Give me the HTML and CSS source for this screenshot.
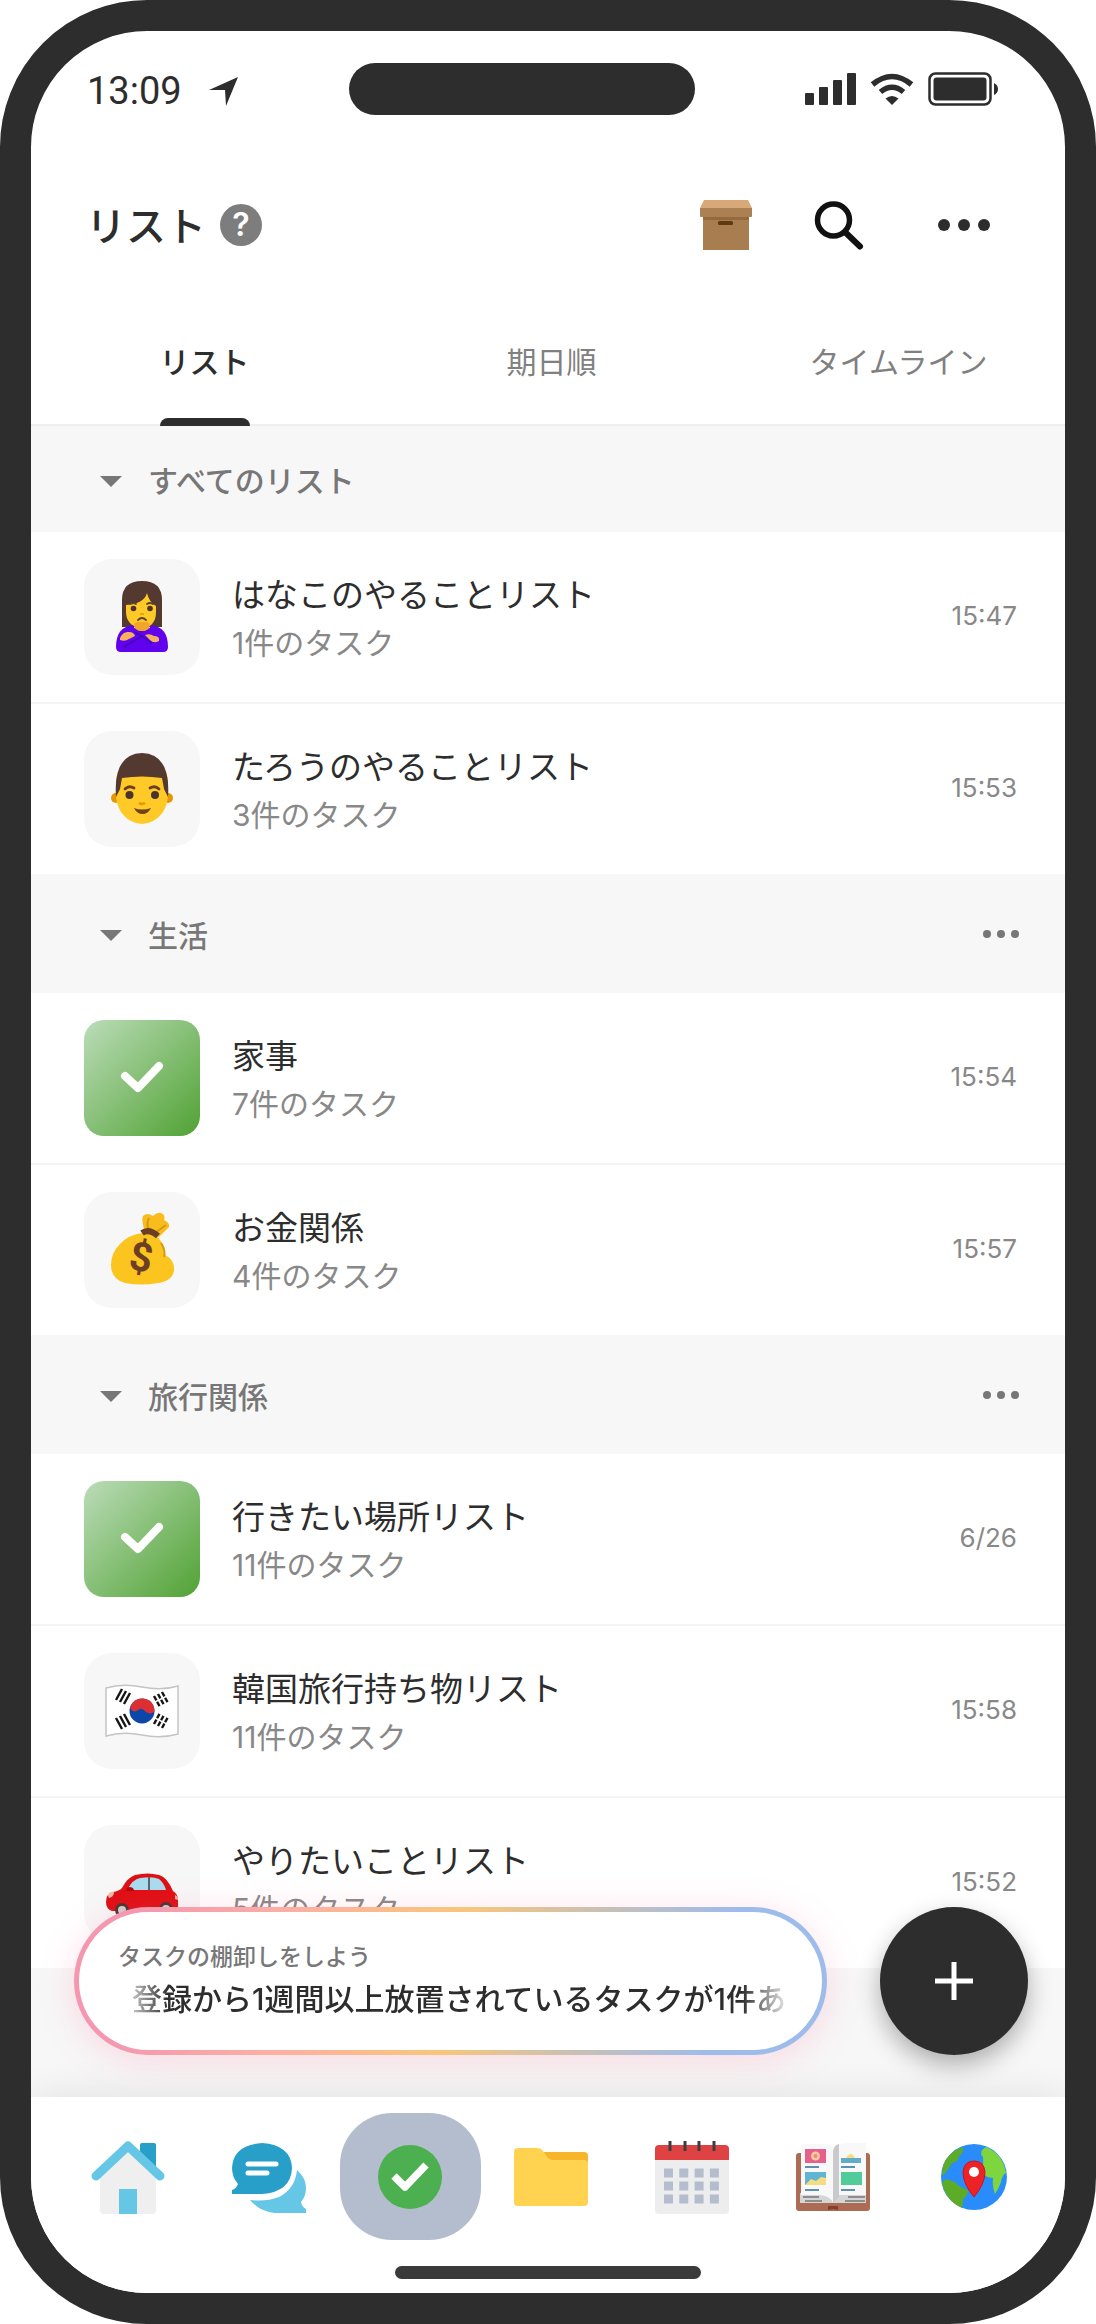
FILE: index.html
```html
<!DOCTYPE html>
<html lang="ja">
<head>
    <meta charset="UTF-8">
    <meta name="viewport" content="width=device-width, initial-scale=1.0">
    <title>リスト</title>
    <link rel="stylesheet" href="styles.css">
</head>
<body>
    <div class="phone">
        <div class="status">
            <div class="status-left">
                <span class="clock">13:09</span>
                <svg width="30" height="31" viewBox="0 0 30 31"><path d="M0 14 29 1 17 30 16 14z" fill="#2d2d2d"/></svg>
            </div>
            <div class="notch"></div>
            <div class="status-right">
                <svg width="51" height="33" viewBox="0 0 51 33" fill="#2d2d2d">
                    <rect x="0" y="20" width="9" height="12" rx="1"/>
                    <rect x="14" y="14" width="9" height="18" rx="1"/>
                    <rect x="28" y="7" width="9" height="25" rx="1"/>
                    <rect x="42" y="0" width="9" height="32" rx="1"/>
                </svg>
                <svg width="44" height="33" viewBox="0 0 44 33">
                    <path d="M2.500 11.500Q22-4.500 41.500 11.500M10.500 19Q22 9.500 33.500 19" fill="none" stroke="#2d2d2d" stroke-width="5.500"/>
                    <path d="M15.500 25.500Q22 20.500 28.500 25.500L22 32z" fill="#2d2d2d"/>
                </svg>
                <svg width="70" height="34" viewBox="0 0 70 34">
                    <rect x="1.500" y="1.500" width="61" height="31" rx="6" fill="none" stroke="#2d2d2d" stroke-width="2.500"/>
                    <rect x="5.500" y="5.500" width="53" height="23" rx="3" fill="#2d2d2d"/>
                    <path d="M66 11q4 2 4 6t-4 6z" fill="#2d2d2d"/>
                </svg>
            </div>
        </div>

        <header class="header">
            <h1>リスト</h1>
            <button class="help" type="button" aria-label="ヘルプ">?</button>
            <div class="header-actions">
                <button type="button" aria-label="アーカイブ">
                    <svg width="52" height="50" viewBox="0 0 52 50">
                        <path d="M3 17h46v33H3z" fill="#a87e50"/>
                        <path d="M3 17h46v3H3z" fill="#94693c"/>
                        <path d="M0 8h52v8q0 1-1 1H1q-1 0-1-1z" fill="#ab8153"/>
                        <path d="M4 0h44l4 8H0z" fill="#d8a878"/>
                        <rect x="18" y="21" width="15" height="4" rx="1.500" fill="#5e3a12"/>
                    </svg>
                </button>
                <button type="button" aria-label="検索">
                    <svg width="50" height="50" viewBox="0 0 50 50" fill="none" stroke="#111" stroke-linecap="round">
                        <circle cx="19.500" cy="20" r="16" stroke-width="5.500"/>
                        <path d="M31 32 46 46.500" stroke-width="6"/>
                    </svg>
                </button>
                <button type="button" aria-label="メニュー">
                    <svg width="52" height="12" viewBox="0 0 52 12" fill="#2d2d2d"><circle cx="6" cy="6" r="6"/><circle cx="26" cy="6" r="6"/><circle cx="46" cy="6" r="6"/></svg>
                </button>
            </div>
        </header>

        <div class="tabs" role="tablist">
            <button class="tab active" type="button" role="tab" aria-selected="true">リスト</button>
            <button class="tab" type="button" role="tab" aria-selected="false">期日順</button>
            <button class="tab" type="button" role="tab" aria-selected="false">タイムライン</button>
        </div>

        <main class="lists">
            <section>
                <div class="section-head first">
                    <button class="toggle" type="button"><span class="caret"></span>すべてのリスト</button>
                </div>
                <a class="row" href="#">
                    <span class="thumb">
                        <svg viewBox="0 0 116 116">
                            <path d="M38 68V41q0-19 20-19t20 19v27z" fill="#543930"/>
                            <path d="M51 60h14v12H51z" fill="#e59600"/>
                            <path d="M42 46Q60 45 63 34q2 9 9 13v6q0 15-15 17-15-4-15-17z" fill="#ffca28"/>
                            <path d="M32 88q0-20 17-22 2 6 9 6t9-6q17 2 17 22 0 5-5 5H37q-5 0-5-5z" fill="#6002ee"/>
                            <path d="M50 65q1 7 8 7t8-7l-3-2H53z" fill="#f2a52b"/>
                            <path d="M36 79q3-7 9-6 5 0 6 4l-6 3q-4 3-9 1zM61 76q5-2 9 1 6 0 5 5-5 3-9-1z" fill="#f7b05b"/>
                            <path d="m40 88 18-11 10 8M58 77l-8-4" fill="none" stroke="#3f0bb5" stroke-width="1.500"/>
                            <g fill="#4b322a"><circle cx="49.500" cy="49.500" r="2.800"/><circle cx="66" cy="49.500" r="2.800"/></g>
                            <path d="M46 45q3-2 6 0M63 45q3-2 6 0M54 61q4-4 8 0" fill="none" stroke="#5d4037" stroke-width="1.800" stroke-linecap="round"/>
                            <path d="M56 55h4" stroke="#e59600" stroke-width="1.500"/>
                        </svg>
                    </span>
                    <span class="info"><span class="name">はなこのやることリスト</span><span class="count">1件のタスク</span></span>
                    <time>15:47</time>
                </a>
                <a class="row" href="#">
                    <span class="thumb">
                        <svg viewBox="0 0 116 116">
                            <circle cx="32" cy="67" r="5" fill="#e59600"/>
                            <circle cx="84" cy="67" r="5" fill="#e59600"/>
                            <path d="M32 50q0-18 26-18t26 18v16q-2 17-15 24-11 6-22 0-13-7-15-24z" fill="#ffca28"/>
                            <path d="M32 66q-3-43 26-44 29 1 26 44l-4-8-2-11q-20-3-40 0l-2 11z" fill="#543930"/>
                            <g fill="#4b322a"><circle cx="45.500" cy="64" r="4"/><circle cx="71" cy="64" r="4"/></g>
                            <path d="M41 58q4-4 9-1M66 57q5-3 9 1" fill="none" stroke="#6d3f22" stroke-width="2.800" stroke-linecap="round"/>
                            <path d="M55 72q3 2 6 0" fill="none" stroke="#e59600" stroke-width="2.500"/>
                            <path d="M50 77q8 3 17 0-3 6-8.500 6T50 77z" fill="#704214"/>
                        </svg>
                    </span>
                    <span class="info"><span class="name">たろうのやることリスト</span><span class="count">3件のタスク</span></span>
                    <time>15:53</time>
                </a>
            </section>

            <section>
                <div class="section-head">
                    <button class="toggle" type="button"><span class="caret"></span>生活</button>
                    <button class="more" type="button" aria-label="メニュー">
                        <svg width="36" height="8" viewBox="0 0 36 8" fill="#777"><circle cx="4" cy="4" r="4"/><circle cx="18" cy="4" r="4"/><circle cx="32" cy="4" r="4"/></svg>
                    </button>
                </div>
                <a class="row" href="#">
                    <span class="thumb done">
                        <svg viewBox="0 0 116 116"><path d="M41 56 54 68 75 46" fill="none" stroke="#fff" stroke-width="8" stroke-linecap="round" stroke-linejoin="round"/></svg>
                    </span>
                    <span class="info"><span class="name">家事</span><span class="count">7件のタスク</span></span>
                    <time>15:54</time>
                </a>
                <a class="row" href="#">
                    <span class="thumb">
                        <svg viewBox="0 0 116 116">
                            <path d="M61 40q-4-12-2-16 4-4 10 0 6-6 11-1 1 3 0 5 6 3 5 7-5 5-10 10z" fill="#f9bc1d"/>
                            <path d="M65 39q-3-8 0-13M71 41l11-8" fill="none" stroke="#d69a12" stroke-width="2"/>
                            <path d="M58 41q14-1 18 7 5 6 5 15 10 5 9 16-2 10-16 12-17 3-33 0-14-4-14-18 0-12 9-21 8-9 22-11z" fill="#fcc41f"/>
                            <path d="M77 51q5 8 3 14" fill="none" stroke="#d69a12" stroke-width="2"/>
                            <path d="M58 41q7-5 16 3" fill="none" stroke="#6d3f22" stroke-width="6"/>
                            <text x="57" y="79" class="dollar" transform="rotate(10 57 66)">$</text>
                        </svg>
                    </span>
                    <span class="info"><span class="name">お金関係</span><span class="count">4件のタスク</span></span>
                    <time>15:57</time>
                </a>
            </section>

            <section>
                <div class="section-head">
                    <button class="toggle" type="button"><span class="caret"></span>旅行関係</button>
                    <button class="more" type="button" aria-label="メニュー">
                        <svg width="36" height="8" viewBox="0 0 36 8" fill="#777"><circle cx="4" cy="4" r="4"/><circle cx="18" cy="4" r="4"/><circle cx="32" cy="4" r="4"/></svg>
                    </button>
                </div>
                <a class="row" href="#">
                    <span class="thumb done">
                        <svg viewBox="0 0 116 116"><path d="M41 56 54 68 75 46" fill="none" stroke="#fff" stroke-width="8" stroke-linecap="round" stroke-linejoin="round"/></svg>
                    </span>
                    <span class="info"><span class="name">行きたい場所リスト</span><span class="count">11件のタスク</span></span>
                    <time>6/26</time>
                </a>
                <a class="row" href="#">
                    <span class="thumb">
                        <svg viewBox="0 0 116 116">
                            <path d="M22 35q17-5 36-1 20 4 36-1v48q-17 5-36 1-19-4-36 1z" fill="#fff" stroke="#c4c4c4" stroke-width="1.500"/>
                            <circle cx="58" cy="58" r="12.500" fill="#0a47a9"/>
                            <path d="M46 54q4-9 13-8.500 11 1 11.500 13-5 4-9 0-4-5-8-1-5 3-7.500-3.500z" fill="#dc2f34"/>
                            <g fill="none" stroke="#151515" stroke-width="2.400">
                                <path d="m32 47 6-11M36 49l6-11M40 51l6-11"/>
                                <path d="m70 71 6-11M74 73l6-11M78 75l6-11" stroke-dasharray="5 1.500"/>
                                <path d="m32 65 6 11M36 63l6 11M40 61l6 11"/>
                                <path d="m70 43 6 11M74 41l6 11M78 39l6 11" stroke-dasharray="5 1.500"/>
                            </g>
                        </svg>
                    </span>
                    <span class="info"><span class="name">韓国旅行持ち物リスト</span><span class="count">11件のタスク</span></span>
                    <time>15:58</time>
                </a>
                <a class="row" href="#">
                    <span class="thumb">
                        <svg viewBox="0 0 116 116">
                            <path d="M22 77q0-8 7-10 6-1 9-4 5-10 13-13 13-3 24 0 8 2 14 16 5 3 5 9v8q0 3-4 3H28q-6-2-6-9z" fill="#df0f14"/>
                            <path d="M43 65q6-11 13-12 13-2 19 1 5 4 7 11z" fill="#a9dcee"/>
                            <path d="M65 52v13" stroke="#5c6468" stroke-width="2"/>
                            <path d="M43 66q-2-3 2-4 5 0 5 4z" fill="#b5060b"/>
                            <path d="M24 71q1-5 6-4 0 5-5 6zM91 70q3 1 3 5l-3-1z" fill="#f6b9a7"/>
                            <circle cx="38" cy="85" r="7" fill="#4b3530"/><circle cx="38" cy="85" r="4" fill="#cfcfcf"/>
                            <circle cx="82" cy="84" r="7" fill="#4b3530"/><circle cx="82" cy="84" r="4" fill="#cfcfcf"/>
                        </svg>
                    </span>
                    <span class="info"><span class="name">やりたいことリスト</span><span class="count">5件のタスク</span></span>
                    <time>15:52</time>
                </a>
            </section>

            <div class="floating">
                <a class="banner" href="#">
                    <span class="banner-label">タスクの棚卸しをしよう</span>
                    <span class="banner-text">登録から1週間以上放置されているタスクが1件あ</span>
                </a>
                <button class="fab" type="button" aria-label="追加">
                    <svg width="38" height="38" viewBox="0 0 38 38"><path d="M19 0v38M0 19h38" stroke="#fff" stroke-width="5"/></svg>
                </button>
            </div>
        </main>

        <nav class="bottom-nav">
            <div class="nav-items">
                <a href="#" aria-label="ホーム">
                    <svg viewBox="0 0 80 80">
                        <rect x="52" y="6" width="16" height="28" rx="2" fill="#279fc8"/>
                        <path d="M12 34 40 12l28 22v39q0 4-4 4H16q-4 0-4-4z" fill="#efefef"/>
                        <path d="M8 39 40 9l32 30" fill="none" stroke="#66c6e6" stroke-width="9" stroke-linecap="round" stroke-linejoin="round"/>
                        <path d="M31 52h18v25H31z" fill="#66c6e6"/>
                    </svg>
                </a>
                <a href="#" aria-label="トーク">
                    <svg viewBox="0 0 80 80">
                        <path d="M68 33q9 8 9 18 0 8-5 14 1 5 5 7v4H46q-16-2-25-13 16 2 29-3 16-8 18-27z" fill="#66c6e6"/>
                        <path d="M3 31Q4 8 33 6q29 2 30 25-1 24-30 26H3v-4q4-1 6-6-6-7-6-16z" fill="#279fc8"/>
                        <path d="M19 27h28M19 36h19" stroke="#fff" stroke-width="5" stroke-linecap="round"/>
                    </svg>
                </a>
                <a class="current" href="#" aria-label="リスト" aria-current="page">
                    <svg viewBox="0 0 80 80">
                        <circle cx="40" cy="40" r="32" fill="#4caf50"/>
                        <path d="m24 39 11 11 21-22" fill="none" stroke="#fff" stroke-width="7.500" stroke-linejoin="round"/>
                    </svg>
                </a>
                <a href="#" aria-label="フォルダ">
                    <svg viewBox="0 0 80 80">
                        <path d="M24 15h49q4 0 4 4v12H24z" fill="#f7b529"/>
                        <path d="M3 15q0-4 4-4h20q3 0 5 3l5 7q2 2 5 2h31q4 0 4 4v38q0 4-4 4H7q-4 0-4-4z" fill="#ffd350"/>
                    </svg>
                </a>
                <a href="#" aria-label="カレンダー">
                    <svg viewBox="0 0 80 80">
                        <path d="M3 20h74v53q0 4-4 4H7q-4 0-4-4z" fill="#ededed"/>
                        <path d="M3 23V12q0-4 4-4h66q4 0 4 4v11z" fill="#df4243"/>
                        <path d="M18 4v10M33 4v10M47 4v10M62 4v10" stroke="#3e3e3e" stroke-width="3"/>
                        <path d="M12 36h56M12 49h56M12 62h56" stroke="#b4bdcd" stroke-width="9" stroke-dasharray="9 6.300"/>
                    </svg>
                </a>
                <a href="#" aria-label="ノート">
                    <svg viewBox="0 0 80 80">
                        <rect x="3" y="16" width="74" height="58" rx="3" fill="#ab6b55"/>
                        <path d="M7 56h66v10H7z" fill="#d5d5d5"/>
                        <path d="M10 60h16M12 64h17M55 60h17M52 64h20" stroke="#8d8d8d" stroke-width="2"/>
                        <path d="M8 8q19-3 32 1v57q-3-8-15-8H8z" fill="#f8f8f8"/>
                        <path d="M46 7q14-2 27-1v52H46z" fill="#f8f8f8"/>
                        <path d="M40 66V14q1-6 6-7v53z" fill="#c9c9cb"/>
                        <path d="M12 12h21v14H12z" fill="#e6608c"/>
                        <circle cx="22.500" cy="19" r="4.500" fill="#f9c7a5"/><circle cx="22.500" cy="19" r="2" fill="#e99068"/>
                        <path d="M12 35h21v13H12z" fill="#5fb5d3"/>
                        <path d="m12 48 6-6 5 2 5-4 5 1v7z" fill="#f8dc82"/>
                        <path d="M48 21h20v5H48z" fill="#62acc9"/>
                        <path d="M53 21q5-8 9 0z" fill="#f8dc82"/>
                        <path d="M48 35h21v13H48z" fill="#50cb99"/>
                        <path d="M12 30h14M12 53h14M48 30h14M48 53h14" stroke="#5b91af" stroke-width="2.200"/>
                        <path d="M35 69h10v4l-5-1-5 1z" fill="#8b3d2c"/>
                    </svg>
                </a>
                <a href="#" aria-label="マップ">
                    <svg viewBox="0 0 80 80">
                        <circle cx="40" cy="40" r="33" fill="#2a8cfb"/>
                        <path d="M11 24Q18 13 29 10q1 6-4 9-1 6-7 7-3 5-6 9-3 5-4 2 0-7 3-13z" fill="#5cac28"/>
                        <path d="m12 42 9 3q5 6 13 8 0 6-5 9 0 5-1 9Q12 64 8 46z" fill="#5cac28"/>
                        <path d="M52 10q17 7 20 26-4 2-5 9-2 6-6 12-3-9-2-16-9 0-11-8 2-7 1-13-5-5 3-10z" fill="#7ed63e"/>
                        <path d="M40 60Q29 47 29 35q1-11 11-11t11 11q0 12-11 25z" fill="#ed2224" stroke="#be1726" stroke-width="1"/>
                        <circle cx="40" cy="35" r="5" fill="#fff"/>
                    </svg>
                </a>
            </div>
            <div class="home-bar"></div>
        </nav>
    </div>
</body>
</html>
```
FILE: styles.css
```css
* {
    box-sizing: border-box;
}
body {
    margin: 0;
    background: #fff;
    color: #2d2d2d;
    font-family: Inter, "Noto Sans CJK JP", sans-serif;
}
button {
    padding: 0;
    border: none;
    background: none;
    color: inherit;
    font: inherit;
    cursor: pointer;
}
a {
    color: inherit;
    text-decoration: none;
}
svg {
    display: block;
}

.phone {
    display: flex;
    flex-direction: column;
    min-height: 100vh;
    border: 31px solid #2d2d2d;
    border-radius: 147px;
    background: #fff;
    overflow: hidden;
}

/* status bar */
.status {
    display: flex;
    justify-content: space-between;
    align-items: center;
    padding: 30px 67px 28px 56px;
}
.status-left {
    display: flex;
    align-items: center;
    gap: 27px;
    padding-top: 4px;
}
.clock {
    font-family: Roboto, sans-serif;
    font-size: 38px;
    line-height: 52px;
}
.notch {
    width: 346px;
    height: 52px;
    border-radius: 26px;
    background: #2d2d2d;
}
.status-right {
    display: flex;
    align-items: center;
    gap: 14px;
}

/* title bar */
.header {
    display: flex;
    align-items: center;
    gap: 14px;
    height: 160px;
    padding: 0 75px 0 55px;
}
.header h1 {
    margin: 0;
    padding-top: 4px;
    font-size: 40px;
    font-weight: 500;
    line-height: 60px;
}
.help {
    width: 42px;
    height: 42px;
    border-radius: 50%;
    background: #7d7d7d;
    color: #fff;
    font-size: 32px;
    font-weight: 600;
    line-height: 42px;
}
.header-actions {
    display: flex;
    align-items: center;
    gap: 62px;
    margin-left: auto;
}
.header-actions button:last-child {
    margin-left: 12px;
}

/* tabs */
.tabs {
    display: flex;
    margin-right: -7px;
    box-shadow: inset 0 -2px #eee;
}
.tab {
    display: flex;
    flex: 1;
    flex-direction: column;
    align-items: center;
    gap: 33px;
    padding-top: 34px;
    color: #808080;
    font-size: 30px;
    line-height: 46px;
}
.tab::after {
    content: "";
    width: 90px;
    height: 8px;
    border-radius: 8px 8px 0 0;
}
.tab.active {
    color: #2d2d2d;
    font-weight: 500;
}
.tab.active::after {
    background: #2d2d2d;
}

/* lists */
.lists {
    position: relative;
    flex: 1;
    background: #f7f7f7;
}
.section-head {
    display: flex;
    justify-content: space-between;
    align-items: center;
    min-height: 119px;
    padding: 0 46px 0 69px;
}
.section-head.first {
    min-height: 106px;
}
.toggle {
    display: flex;
    align-items: center;
    gap: 26px;
    padding-top: 4px;
    color: #777;
    font-size: 30px;
    font-weight: 500;
    line-height: 48px;
}
.caret {
    border: 11px solid transparent;
    border-top-color: #777;
    border-bottom-width: 0;
}
.row {
    display: flex;
    align-items: center;
    gap: 32px;
    padding: 27px 48px 27px 53px;
    background: #fff;
}
.row + .row {
    border-top: 2px solid #f5f5f5;
}
.thumb {
    width: 116px;
    height: 116px;
    border-radius: 28px;
    background: #f7f7f7;
}
.thumb.done {
    border-radius: 20px;
    background: linear-gradient(135deg, #bbdcb8, #51a234);
}
.dollar {
    fill: #6d3f22;
    font-family: Roboto, sans-serif;
    font-size: 40px;
    font-weight: 700;
    text-anchor: middle;
}
.info {
    display: flex;
    flex: 1;
    flex-direction: column;
    padding-top: 4px;
    line-height: 48px;
}
.name {
    font-size: 33px;
}
.count {
    color: #888;
    font-size: 30px;
}
time {
    padding-bottom: 4px;
    color: #888;
    font-size: 26px;
}

/* banner and add button lie over the list */
.floating {
    position: absolute;
    right: 37px;
    bottom: 42px;
    left: 43px;
    display: flex;
    gap: 53px;
}
.banner {
    display: flex;
    flex: 1;
    flex-direction: column;
    justify-content: center;
    min-width: 0;
    padding: 0 30px 4px 39px;
    border: 5px solid transparent;
    border-radius: 74px;
    background:
        linear-gradient(#fff, #fff) padding-box,
        linear-gradient(100deg, #f497b0 8%, #fbafa4 28%, #f8c67a 50%, #c8c0b6 68%, #9dbcec 85%) border-box;
    box-shadow: 0 6px 36px rgba(255, 110, 150, 0.22);
}
.banner-label {
    color: #777;
    font-size: 23px;
    font-weight: 500;
    line-height: 40px;
}
.banner-text {
    padding-left: 14px;
    font-size: 30px;
    font-weight: 500;
    line-height: 44px;
    white-space: nowrap;
    -webkit-mask-image: linear-gradient(90deg, transparent, #000 50px, #000 calc(100% - 50px), transparent);
    mask-image: linear-gradient(90deg, transparent, #000 50px, #000 calc(100% - 50px), transparent);
}
.fab {
    display: flex;
    justify-content: center;
    align-items: center;
    width: 148px;
    height: 148px;
    border-radius: 50%;
    background: #2d2d2d;
    box-shadow: 0 10px 24px rgba(0, 0, 0, 0.3);
}

/* bottom navigation */
.bottom-nav {
    position: relative;
    display: flex;
    flex-direction: column;
    align-items: center;
    gap: 26px;
    padding: 16px 0 14px;
    background: #fff;
    box-shadow: 0 -2px 36px rgba(0, 0, 0, 0.09);
}
.nav-items {
    display: flex;
    width: 100%;
    padding: 0 21px 0 27px;
}
.nav-items a {
    display: flex;
    flex: 1;
    justify-content: center;
    align-items: center;
    height: 127px;
    border-radius: 52px;
}
.nav-items svg {
    width: 80px;
    height: 80px;
}
.nav-items .current {
    background: #b3bdcd;
}
.home-bar {
    width: 306px;
    height: 13px;
    border-radius: 7px;
    background: #3a3a3a;
}
```
